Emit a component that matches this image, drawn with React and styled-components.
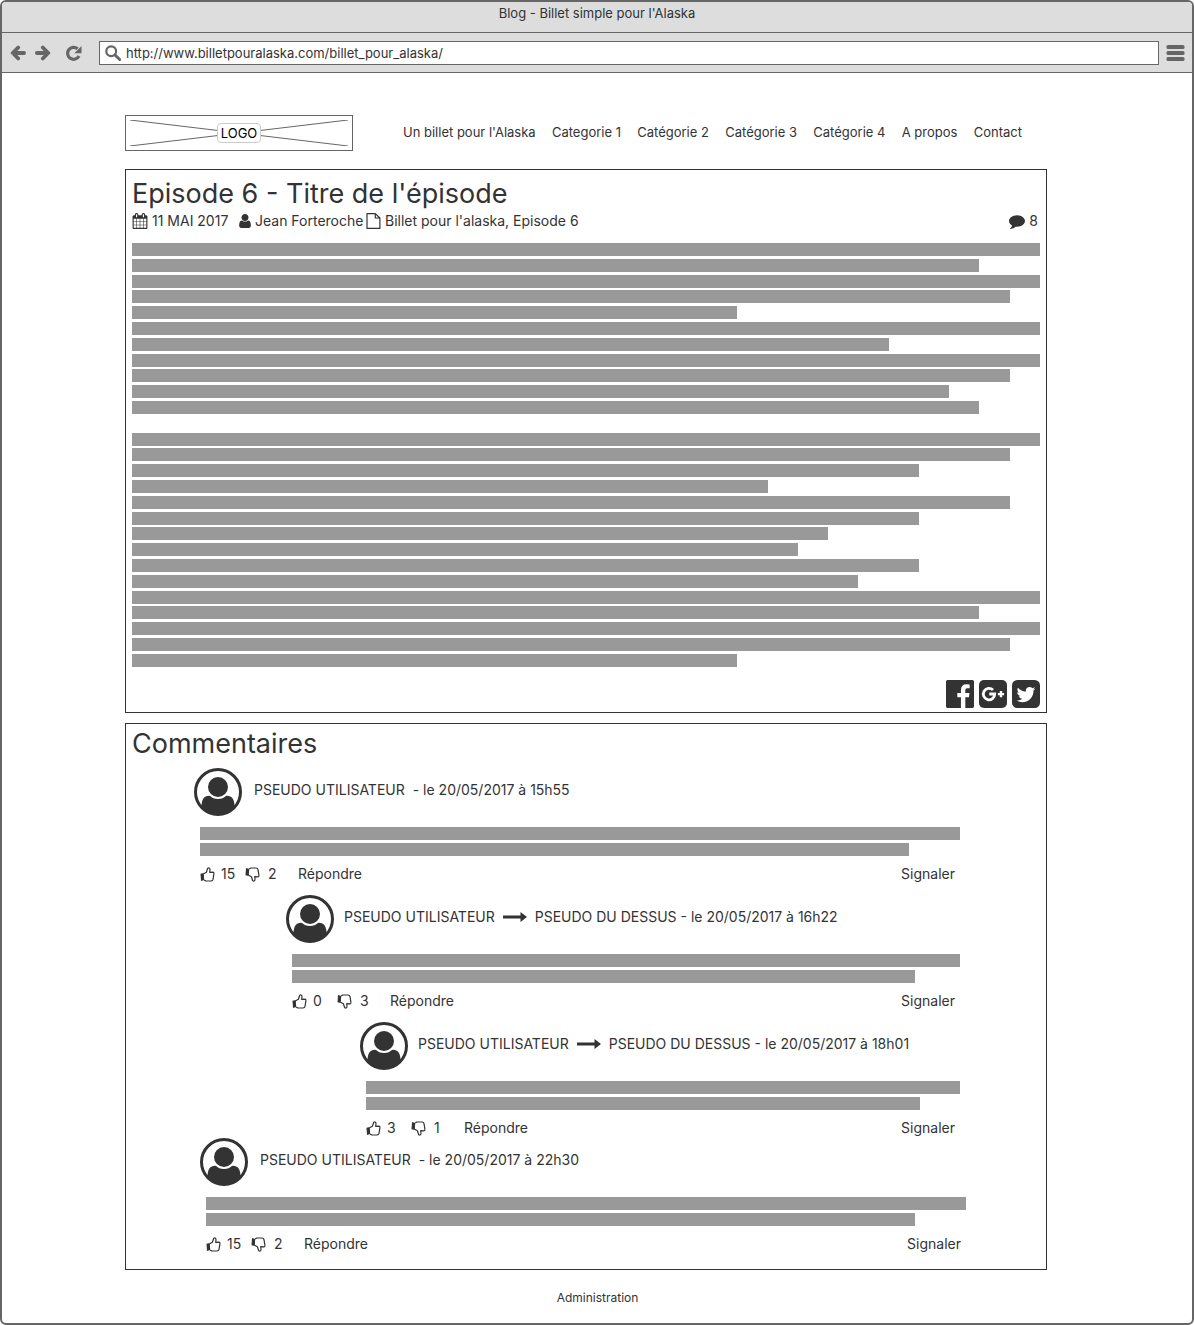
import React from 'react';
import styled, { createGlobalStyle } from 'styled-components';

const INK = '#333333';
const CHROME = '#666666';

const GlobalStyle = createGlobalStyle`
  *, *::before, *::after { box-sizing: border-box; }
  body {
    margin: 0;
    background: #ffffff;
    color: ${INK};
    font-family: Inter, "Liberation Sans", sans-serif;
    font-size: 14px;
    line-height: 20px;
  }
  a { color: inherit; text-decoration: none; }
  h1, h2, p { margin: 0; padding: 0; }
  button {
    border: 0;
    padding: 0;
    background: none;
    color: inherit;
    font: inherit;
    cursor: pointer;
  }
  svg { display: block; flex: none; }
`;

/* ---------- browser frame ---------- */

const BrowserWindow = styled.div`
  min-height: 100vh;
  border: 2px solid ${CHROME};
  border-radius: 6px;
  overflow: hidden;
`;

const TitleBar = styled.div`
  height: 31px;
  padding-top: 1px;
  border-bottom: 1px solid ${CHROME};
  background: #dddddd;
  font-size: 13px;
  text-align: center;
`;

const Toolbar = styled.div`
  display: flex;
  align-items: center;
  height: 40px;
  padding: 0 7px 0 8px;
  border-bottom: 1px solid ${CHROME};
  background: #dddddd;
  color: ${CHROME};
`;

const HistoryButtons = styled.div`
  display: flex;
  gap: 9px;
  margin-right: 14px;
`;

const AddressBar = styled.label`
  display: flex;
  flex: 1;
  align-items: center;
  gap: 5px;
  height: 24px;
  margin: 0 7px 0 16px;
  padding: 0 5px;
  border: 1px solid ${CHROME};
  background: #ffffff;
`;

const AddressInput = styled.input`
  flex: 1;
  min-width: 0;
  border: 0;
  padding: 0;
  outline: 0;
  background: none;
  color: ${INK};
  font: inherit;
  font-size: 13px;
`;

/* ---------- page ---------- */

const Page = styled.div`
  display: flex;
  flex-direction: column;
  padding: 42px 145px 0 123px;
`;

const Header = styled.header`
  display: flex;
  align-items: center;
  margin-bottom: 18px;
`;

const Logo = styled.a`
  display: grid;
  place-items: center;
  flex: none;
  width: 228px;
  height: 36px;
  border: 1px solid ${CHROME};
  > * { grid-area: 1 / 1; }
`;

const LogoLabel = styled.span`
  padding: 0 3px;
  border: 1px solid #cccccc;
  border-radius: 4px;
  background: #ffffff;
  color: #000000;
  font-size: 13px;
  line-height: 18px;
`;

const Nav = styled.nav`
  display: flex;
  flex: 1;
  justify-content: space-between;
  margin: 0 25px 0 50px;
  padding-bottom: 2px;
  font-size: 13px;
  white-space: nowrap;
`;

const Panel = styled.section`
  display: flex;
  flex-direction: column;
  margin-bottom: 10px;
  padding: ${(p) => p.$padding};
  border: 1px solid ${INK};
`;

const Heading = styled.h1`
  font-size: 27px;
  font-weight: 400;
  line-height: 34px;
`;

const MetaRow = styled.div`
  display: grid;
  grid-template-columns: 107px 127px 1fr auto;
  align-items: center;
  margin-bottom: 12px;
  padding-right: 2px;
`;

const MetaItem = styled.span`
  display: flex;
  align-items: center;
  gap: 4px;
  white-space: nowrap;
`;

const TextBlock = styled.div`
  display: flex;
  flex-direction: column;
  justify-content: space-between;
  height: ${(p) => p.$height};
`;

const TextLine = styled.div`
  width: ${(p) => (p.$share / 30) * 100}%;
  height: 13px;
  background: #999999;
`;

const Social = styled.div`
  display: flex;
  justify-content: flex-end;
  gap: 5px;
  margin-top: 13px;
`;

/* ---------- comments ---------- */

const Thread = styled.div`
  padding: ${(p) => p.$padding};
`;

const Comment = styled.article`
  margin-left: ${(p) => p.$indent || 0};
`;

const Replies = styled.div`
  display: flex;
  flex-direction: column;
  gap: 11px;
  padding-top: 11px;
`;

const Author = styled.div`
  display: flex;
  align-items: center;
  gap: ${(p) => p.$gap};
  margin-bottom: 11px;
`;

const Byline = styled.p`
  display: flex;
  align-items: center;
  gap: 8px;
  padding-bottom: 4px;
  white-space: nowrap;
`;

const CommentBody = styled.div`
  margin-left: 6px;
`;

const Actions = styled.div`
  display: grid;
  grid-template-columns: 45px 53px auto 1fr;
  align-items: center;
  justify-items: start;
  padding: 8px 5px 0 0;
`;

const Vote = styled.button`
  display: flex;
  align-items: center;
  gap: ${(p) => p.$gap};
`;

const ReportButton = styled.button`
  justify-self: end;
`;

const Footer = styled.footer`
  padding: 8px 0 12px 23px;
  font-size: 12px;
  text-align: center;
`;

/* ---------- icons ---------- */

const Glyph = ({ width = 16, height = 16, d, label, box = '0 0 1792 1792' }) => (
  <svg width={width} height={height} viewBox={box} fill="currentColor" role={label ? 'img' : undefined} aria-label={label} aria-hidden={label ? undefined : true}>
    <path d={d} />
  </svg>
);

const CALENDAR = 'M192 1664h288v-288h-288v288zm352 0h320v-288h-320v288zm-352-352h288v-320h-288v320zm352 0h320v-320h-320v320zm-352-384h288v-288h-288v288zm736 736h320v-288h-320v288zm-384-736h320v-288h-320v288zm768 736h288v-288h-288v288zm-384-352h320v-320h-320v320zm-352-864v-288q0-13-9.500-22.500t-22.500-9.500h-64q-13 0-22.500 9.500t-9.500 22.500v288q0 13 9.500 22.500t22.500 9.500h64q13 0 22.500-9.500t9.500-22.500zm736 864h288v-320h-288v320zm-384-384h320v-288h-320v288zm384 0h288v-288h-288v288zm32-480v-288q0-13-9.500-22.500t-22.500-9.500h-64q-13 0-22.500 9.500t-9.500 22.500v288q0 13 9.500 22.500t22.500 9.500h64q13 0 22.500-9.500t9.500-22.500zm384-64v1280q0 52-38 90t-90 38h-1408q-52 0-90-38t-38-90v-1280q0-52 38-90t90-38h128v-96q0-66 47-113t113-47h64q66 0 113 47t47 113v96h384v-96q0-66 47-113t113-47h64q66 0 113 47t47 113v96h128q52 0 90 38t38 90z';
const USER = 'M1536 1399q0 109-62.500 187t-150.500 78h-854q-88 0-150.500-78t-62.500-187q0-85 8.500-160.500t31.500-152 58.500-131 94-89 134.500-34.500q131 128 313 128t313-128q76 0 134.500 34.500t94 89 58.500 131 31.500 152 8.500 160.500zm-256-887q0 159-112.500 271.500t-271.500 112.500-271.500-112.500-112.500-271.500 112.500-271.500 271.500-112.500 271.500 112.500 112.500 271.500z';
const BUBBLE = 'M1792 896q0 174-120 321.500t-326 233-450 85.500q-70 0-145-8-198 175-460 242-49 14-114 22-17 2-30.500-9t-17.500-29v-1q-3-4-.5-12t2-10 4.500-9.500l6-9 7-8.500 8-9q7-8 31-34.500t34.500-38 31-39.500 32.500-51 27-59 26-76q-157-89-247.500-220t-90.500-281q0-130 71-248.500t191-204.500 286-136.500 348-50.500q244 0 450 85.500t326 233 120 321.500z';
const FACEBOOK = 'M1579 128q35 0 60 25t25 60v1366q0 35-25 60t-60 25h-391v-595h199l30-232h-229v-148q0-56 23.500-84t91.500-28l122-1v-207q-63-9-178-9-136 0-217.500 80t-81.500 226v171h-200v232h200v595h-735q-35 0-60-25t-25-60v-1366q0-35 25-60t60-25h1366z';
const TWITTER = 'M1408 610q-56 25-121 34 68-40 93-117-65 38-134 51-61-66-153-66-87 0-148.500 61.500t-61.500 148.500q0 29 5 48-129-7-242-65t-192-155q-29 50-29 106 0 114 91 175-47-1-100-26v2q0 75 50 133.500t123 72.500q-29 8-51 8-13 0-39-4 21 63 74.500 104t121.500 42q-116 90-261 90-26 0-50-3 148 94 322 94 112 0 210-35.500t168-95 120.500-137 75-162 24.500-168.500q0-18-1-27 63-45 105-109zm256-194v960q0 119-84.500 203.500t-203.500 84.500h-960q-119 0-203.500-84.500t-84.500-203.500v-960q0-119 84.500-203.500t203.500-84.500h960q119 0 203.500 84.500t84.500 203.500z';

const GooglePlus = () => (
  <svg width="28" height="28" viewBox="0 0 28 28" role="img" aria-label="Google Plus">
    <rect width="28" height="28" rx="5" fill={INK} />
    <path d="M14 10 A5.700 5.700 0 1 0 15.700 14 H10.300" fill="none" stroke="#fff" strokeWidth="2.800" />
    <path d="M22 11 V17.200 M18.900 14.100 H25.100" stroke="#fff" strokeWidth="2.400" />
  </svg>
);

const FileIcon = () => (
  <svg width="15" height="16" viewBox="0 0 15 16" fill="none" stroke="currentColor" strokeWidth="1.200" strokeLinejoin="round" aria-hidden="true">
    <path d="M1 .6h8.300l4.600 4.400v10.400H1z M9.300 .6V5h4.600" />
  </svg>
);

const HistoryArrow = ({ forward }) => (
  <svg width="16" height="16" viewBox="0 0 16 16" fill="none" stroke="currentColor" strokeWidth="3.800" strokeLinecap="round" aria-hidden="true">
    <g transform={forward ? 'matrix(-1 0 0 1 16 0)' : undefined}>
      <path d="M3 8h11.100M8.200 2.500 2.700 8l5.500 5.500" strokeLinejoin="round" />
    </g>
  </svg>
);

const Reload = () => (
  <svg width="18" height="16" viewBox="0 0 18 16" aria-hidden="true">
    <path d="M14 11 A6 6 0 1 1 12.600 3.800" fill="none" stroke="currentColor" strokeWidth="3.200" />
    <path d="M16.500 1v7.200H9.300z" fill="currentColor" />
  </svg>
);

const Search = () => (
  <svg width="16" height="16" viewBox="0 0 16 16" fill="none" stroke="currentColor" aria-hidden="true">
    <circle cx="6.200" cy="6.200" r="4.900" strokeWidth="2.200" />
    <path d="M10 10l4.700 4.500" strokeWidth="3" strokeLinecap="round" />
  </svg>
);

const MenuBars = () => (
  <svg width="19" height="16" viewBox="0 0 19 16" fill="currentColor" aria-hidden="true">
    <rect x=".5" width="18" height="4" rx="1.500" />
    <rect x=".5" y="6" width="18" height="4" rx="1.500" />
    <rect x=".5" y="12" width="18" height="4" rx="1.500" />
  </svg>
);

const Avatar = () => (
  <svg width="48" height="48" viewBox="0 0 48 48" aria-hidden="true">
    <circle cx="24" cy="24" r="22.500" fill="#fff" stroke={INK} strokeWidth="3" />
    <path d="M7.500 38.500C7.500 31.500 10 27.700 15 27.700h18c5 0 7.500 3.800 7.500 10.800A22.500 22.500 0 0 1 7.500 38.500z" fill={INK} />
    <circle cx="24" cy="19" r="11" fill={INK} stroke="#fff" strokeWidth="2" />
  </svg>
);

const LongArrow = () => (
  <svg width="24" height="10" viewBox="0 0 24 10" fill="currentColor" role="img" aria-label="en réponse à">
    <path d="M0 3.500h17.500V0L24 5l-6.500 5V6.500H0z" />
  </svg>
);

const Thumb = ({ down }) => (
  <svg width="15" height="15" viewBox="0 0 15 15" aria-hidden="true">
    <g transform={down ? 'matrix(1 0 0 -1 0 15)' : undefined}>
      <path d="M.5 6.800 3.800 6.100 4.200 13 1 14z" fill="currentColor" />
      <path d="M3.700 6.700 6.400 5.200 7.700 1.200Q10 .3 10 2.800L9.700 5.300 13 5.100Q14.200 5.400 13.900 6.800L13 12.400Q12.700 13.900 11 14H5.800L4.100 12.900" fill="none" stroke="currentColor" strokeWidth="1.200" strokeLinejoin="round" />
    </g>
  </svg>
);

/* ---------- content ---------- */

const NAV = ["Un billet pour l'Alaska", 'Categorie 1', 'Catégorie 2', 'Catégorie 3', 'Catégorie 4', 'A propos', 'Contact'];

/* Line lengths in thirtieths of the column; 0 is the paragraph break. */
const LINES = [30, 28, 30, 29, 20, 30, 25, 30, 29, 27, 28, 0, 30, 29, 26, 21, 29, 26, 23, 22, 26, 24, 30, 28, 30, 29, 20];

function CommentItem({ indent, gap = '10px', to, date, up, down }) {
  return (
    <Comment $indent={indent}>
      <Author $gap={gap}>
        <Avatar />
        <Byline>
          <span>PSEUDO UTILISATEUR</span>
          {to && <LongArrow />}
          <span>{to ? `${to} - le ${date}` : `- le ${date}`}</span>
        </Byline>
      </Author>
      <CommentBody>
        <TextBlock $height="29px">
          <TextLine $share={30} />
          <TextLine $share={28} />
        </TextBlock>
        <Actions>
          <Vote $gap="6px" aria-label={`J'aime ${up}`}><Thumb />{up}</Vote>
          <Vote $gap="8px" aria-label={`Je n'aime pas ${down}`}><Thumb down />{down}</Vote>
          <button>Répondre</button>
          <ReportButton>Signaler</ReportButton>
        </Actions>
      </CommentBody>
    </Comment>
  );
}

export default function App() {
  return (
    <>
      <GlobalStyle />
      <BrowserWindow>
        <TitleBar>Blog - Billet simple pour l'Alaska</TitleBar>
        <Toolbar>
          <HistoryButtons>
            <button aria-label="Précédent"><HistoryArrow /></button>
            <button aria-label="Suivant"><HistoryArrow forward /></button>
          </HistoryButtons>
          <button aria-label="Recharger"><Reload /></button>
          <AddressBar>
            <Search />
            <AddressInput aria-label="Adresse" defaultValue="http://www.billetpouralaska.com/billet_pour_alaska/" />
          </AddressBar>
          <button aria-label="Menu"><MenuBars /></button>
        </Toolbar>

        <Page>
          <Header>
            <Logo href="#">
              <svg width="218" height="26" viewBox="0 0 218 26" stroke={CHROME} aria-hidden="true">
                <path d="M0 0 218 26M0 26 218 0" />
              </svg>
              <LogoLabel>LOGO</LogoLabel>
            </Logo>
            <Nav>
              {NAV.map((item) => <a href="#" key={item}>{item}</a>)}
            </Nav>
          </Header>

          <Panel $padding="7px 6px 4px">
            <Heading>Episode 6 - Titre de l'épisode</Heading>
            <MetaRow>
              <MetaItem><Glyph d={CALENDAR} />11 MAI 2017</MetaItem>
              <MetaItem><Glyph d={USER} width={12} height={14} box="256 128 1280 1536" />Jean Forteroche</MetaItem>
              <MetaItem><FileIcon />Billet pour l'alaska, Episode 6</MetaItem>
              <MetaItem><Glyph d={BUBBLE} />8</MetaItem>
            </MetaRow>
            <TextBlock $height="424px">
              {LINES.map((share, i) => <TextLine $share={share} key={i} />)}
            </TextBlock>
            <Social>
              <a href="#"><Glyph d={FACEBOOK} width={28} height={28} box="128 128 1536 1536" label="Facebook" /></a>
              <a href="#"><GooglePlus /></a>
              <a href="#"><Glyph d={TWITTER} width={28} height={28} box="128 128 1536 1536" label="Twitter" /></a>
            </Social>
          </Panel>

          <Panel $padding="3px 6px 15px">
            <Heading as="h2">Commentaires</Heading>
            <Thread $padding="7px 80px 0 62px">
              <CommentItem gap="12px" date="20/05/2017 à 15h55" up={15} down={2} />
              <Replies>
                <CommentItem indent="92px" to="PSEUDO DU DESSUS" date="20/05/2017 à 16h22" up={0} down={3} />
                <CommentItem indent="166px" to="PSEUDO DU DESSUS" date="20/05/2017 à 18h01" up={3} down={1} />
              </Replies>
            </Thread>
            <Thread $padding="0 74px 0 68px">
              <CommentItem gap="12px" date="20/05/2017 à 22h30" up={15} down={2} />
            </Thread>
          </Panel>

          <Footer><a href="#">Administration</a></Footer>
        </Page>
      </BrowserWindow>
    </>
  );
}
